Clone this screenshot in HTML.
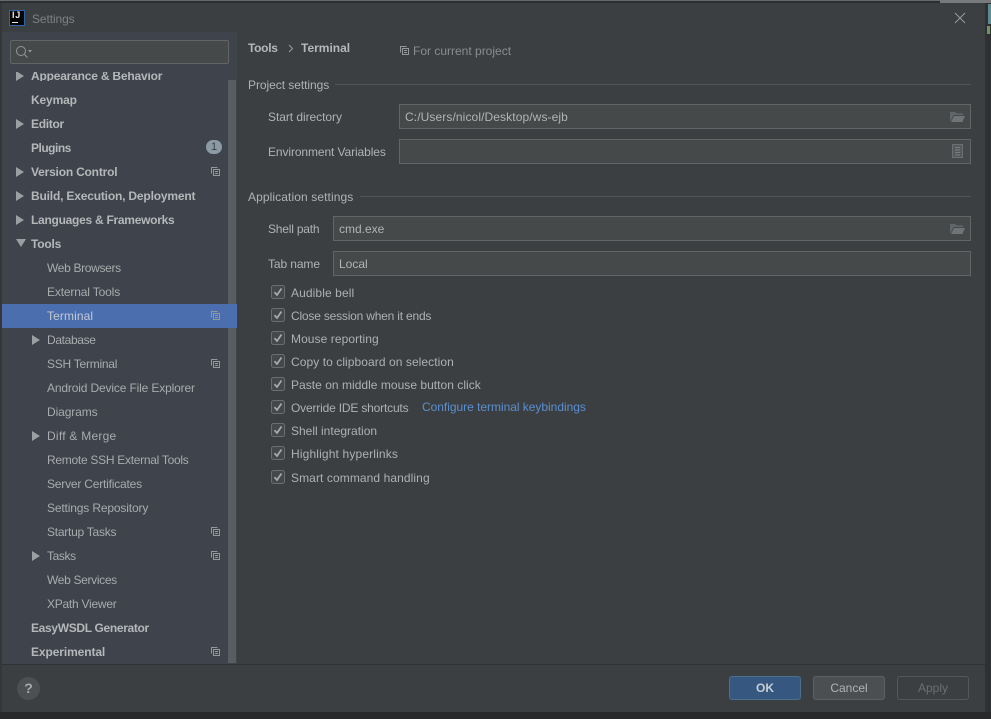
<!DOCTYPE html>
<html><head><meta charset="utf-8"><style>
html,body{margin:0;padding:0;width:991px;height:719px;overflow:hidden;background:#2b2b2b}
body{position:relative;font-family:"Liberation Sans",sans-serif;font-size:12px;color:#b0b2b3}
.a{position:absolute}
.t{position:absolute;white-space:nowrap;line-height:16px;height:16px}
.b{font-weight:bold;color:#b5b7b8}
.s{color:#a9abac}
.tri{position:absolute;width:0;height:0;border-left:8px solid #9c9fa2;border-top:5px solid transparent;border-bottom:5px solid transparent}
.cp{position:absolute;width:9px;height:9px}
.inp{position:absolute;box-sizing:border-box;background:#45494a;border:1px solid #646464;height:25px}
.cb{position:absolute;left:271px;width:14px;height:14px}
.lbl{position:absolute;left:291px;white-space:nowrap;line-height:16px;color:#aeb0b1}
.btn{position:absolute;top:676px;height:24px;box-sizing:border-box;border-radius:3px;text-align:center;line-height:23px}
</style></head><body>
<svg width="0" height="0" style="position:absolute"><defs>
<symbol id="c" viewBox="0 0 9 9"><path d="M.5 6.500V.5h6M2.500 2.500h6v6h-6zM4 4.500h3M4 6.500h3" fill="none" stroke="#95989a" stroke-width="1"/></symbol>
<symbol id="k" viewBox="0 0 14 14"><rect x=".5" y=".5" width="13" height="13" rx="2" fill="#45484a" stroke="#6b6e70"/><path d="M3.500 7.200 6 10l4.500-6.500" fill="none" stroke="#a9abad" stroke-width="1.700"/></symbol>
<symbol id="f" viewBox="0 0 15 11"><path d="M0 11V1h5l1.500 1.500H13V4H3.500L0 11z" fill="#62676a"/><path d="M1 11l3-6h11l-2.500 6z" fill="#6f7477"/></symbol>
</defs></svg>

<!-- window -->
<div class="a" style="left:0;top:0;width:991px;height:3px;background:#2d2e30"></div>
<div class="a" style="left:0;top:0;width:991px;height:1px;background:#66686a"></div>
<div class="a" style="left:940px;top:0;width:51px;height:3px;background:#77797b"></div>
<div class="a" style="left:2px;top:3px;width:983px;height:709px;background:#3c3f41"></div>
<div class="a" style="left:0;top:3px;width:2px;height:709px;background:#34373a"></div>
<div class="a" style="left:985px;top:3px;width:6px;height:716px;background:#2e3032"></div>
<div class="a" style="left:0;top:712px;width:991px;height:7px;background:#28292a"></div>
<div class="a" style="left:988px;top:4px;width:3px;height:20px;background:#5c8a90"></div>
<div class="a" style="left:987px;top:26px;width:3px;height:8px;background:#6f9460"></div>

<!-- title -->
<div class="a" style="left:9px;top:10px;width:16px;height:16px;box-sizing:border-box;background:#050505;border:1px solid #2c66a8"></div>
<div class="t" style="left:12px;top:10px;font-size:9px;font-weight:bold;color:#e8e8e8;line-height:11px;height:11px;letter-spacing:.8px">IJ</div>
<div class="a" style="left:12px;top:22px;width:6px;height:1px;background:#e8e8e8"></div>
<div class="t" style="left:32px;top:11px;color:#7e8183;letter-spacing:-.1px">Settings</div>
<svg class="a" style="left:954px;top:12px" width="12" height="12"><path d="M1 1l10 10M11 1 1 11" stroke="#999b9d" fill="none"/></svg>

<!-- sidebar -->
<div class="a" style="left:2px;top:32px;width:235px;height:632px;background:#3e434c"></div>
<div class="a" style="left:228px;top:80px;width:8px;height:583px;background:#595c61"></div>
<div class="a" style="left:2px;top:304px;width:235px;height:24px;background:#4b6eaf"></div>
<div class="a" style="left:10px;top:40px;width:219px;height:24px;box-sizing:border-box;background:#45494a;border:1px solid #646464;border-radius:2px"></div>
<svg class="a" style="left:15px;top:45px" width="18" height="14"><circle cx="6" cy="6" r="4.500" fill="none" stroke="#94979a"/><path d="M9.500 9.500l3 3" stroke="#94979a" fill="none"/><path d="M13 5h4l-2 2.500z" fill="#94979a"/></svg>

<div class="a" style="left:2px;top:72px;width:226px;height:9px;overflow:hidden">
<div class="t b" style="left:29px;top:-4px;letter-spacing:-.2px">Appearance &amp; Behavior</div>
<div class="tri" style="left:14px;top:-1px"></div>
</div>
<div class="t b" style="left:31px;top:92px;letter-spacing:-.15px">Keymap</div>
<div class="tri" style="left:16px;top:119px"></div><div class="t b" style="left:31px;top:116px;letter-spacing:-.3px">Editor</div>
<div class="t b" style="left:31px;top:140px;letter-spacing:-.5px">Plugins</div>
<div class="a" style="left:206px;top:140px;width:16px;height:14px;border-radius:7px;background:#8b9aa5;color:#3c3f41;font-size:11px;line-height:14px;text-align:center">1</div>
<div class="tri" style="left:16px;top:167px"></div><div class="t b" style="left:31px;top:164px;letter-spacing:-.2px">Version Control</div>
<svg class="cp" style="left:211px;top:167px"><use href="#c"/></svg>
<div class="tri" style="left:16px;top:191px"></div><div class="t b" style="left:31px;top:188px;letter-spacing:-.18px">Build, Execution, Deployment</div>
<div class="tri" style="left:16px;top:215px"></div><div class="t b" style="left:31px;top:212px;letter-spacing:-.27px">Languages &amp; Frameworks</div>
<div class="a" style="left:16px;top:239px;width:0;height:0;border-top:8px solid #9c9fa2;border-left:5px solid transparent;border-right:5px solid transparent"></div>
<div class="t b" style="left:31px;top:236px;letter-spacing:-.2px">Tools</div>
<div class="t s" style="left:47px;top:260px;letter-spacing:-.33px">Web Browsers</div>
<div class="t s" style="left:47px;top:284px;letter-spacing:-.15px">External Tools</div>
<div class="t" style="left:47px;top:308px;color:#c3c8d2;letter-spacing:.1px">Terminal</div>
<svg class="cp" style="left:211px;top:311px"><use href="#c"/></svg>
<div class="tri" style="left:32px;top:335px"></div><div class="t s" style="left:47px;top:332px;letter-spacing:-.35px">Database</div>
<div class="t s" style="left:47px;top:356px;letter-spacing:-.25px">SSH Terminal</div>
<svg class="cp" style="left:211px;top:359px"><use href="#c"/></svg>
<div class="t s" style="left:47px;top:380px;letter-spacing:-.15px">Android Device File Explorer</div>
<div class="t s" style="left:47px;top:404px;letter-spacing:-.1px">Diagrams</div>
<div class="tri" style="left:32px;top:431px"></div><div class="t s" style="left:47px;top:428px;letter-spacing:.25px">Diff &amp; Merge</div>
<div class="t s" style="left:47px;top:452px;letter-spacing:-.28px">Remote SSH External Tools</div>
<div class="t s" style="left:47px;top:476px;letter-spacing:-.2px">Server Certificates</div>
<div class="t s" style="left:47px;top:500px;letter-spacing:-.15px">Settings Repository</div>
<div class="t s" style="left:47px;top:524px;letter-spacing:-.25px">Startup Tasks</div>
<svg class="cp" style="left:211px;top:527px"><use href="#c"/></svg>
<div class="tri" style="left:32px;top:551px"></div><div class="t s" style="left:47px;top:548px;letter-spacing:-.4px">Tasks</div>
<svg class="cp" style="left:211px;top:551px"><use href="#c"/></svg>
<div class="t s" style="left:47px;top:572px;letter-spacing:-.33px">Web Services</div>
<div class="t s" style="left:47px;top:596px;letter-spacing:-.25px">XPath Viewer</div>
<div class="t b" style="left:31px;top:620px;letter-spacing:-.33px">EasyWSDL Generator</div>
<div class="t b" style="left:31px;top:644px;letter-spacing:-.1px">Experimental</div>
<svg class="cp" style="left:211px;top:647px"><use href="#c"/></svg>

<!-- main header -->
<div class="t b" style="left:248px;top:40px;letter-spacing:-.3px">Tools</div>
<svg class="a" style="left:288px;top:44px" width="6" height="9"><path d="M1 1l3.500 3.500L1 8" stroke="#9a9c9e" fill="none"/></svg>
<div class="t b" style="left:301px;top:40px">Terminal</div>
<svg class="cp" style="left:400px;top:46px"><use href="#c"/></svg>
<div class="t" style="left:413px;top:43px;color:#8a8d8f">For current project</div>

<!-- project settings -->
<div class="t" style="left:248px;top:77px;letter-spacing:-.05px">Project settings</div>
<div class="a" style="left:335px;top:84px;width:636px;height:1px;background:#515355"></div>
<div class="t" style="left:268px;top:109px;letter-spacing:-.05px">Start directory</div>
<div class="inp" style="left:399px;top:104px;width:572px"></div>
<div class="t" style="left:405px;top:109px;color:#b2b4b5;letter-spacing:.1px">C:/Users/nicol/Desktop/ws-ejb</div>
<svg class="a" style="left:950px;top:111px" width="15" height="11"><use href="#f"/></svg>
<div class="t" style="left:268px;top:144px;letter-spacing:-.1px">Environment Variables</div>
<div class="inp" style="left:399px;top:139px;width:572px"></div>
<svg class="a" style="left:952px;top:144px" width="11" height="14"><rect x=".5" y=".5" width="10" height="13" fill="#55595b" stroke="#6c6f71"/><path d="M3 3.500h5M3 6h5M3 8.500h5M3 11h5" stroke="#7a7d7f"/></svg>

<!-- app settings -->
<div class="t" style="left:248px;top:189px;letter-spacing:.1px">Application settings</div>
<div class="a" style="left:360px;top:196px;width:611px;height:1px;background:#515355"></div>
<div class="t" style="left:268px;top:221px;letter-spacing:-.2px">Shell path</div>
<div class="inp" style="left:333px;top:216px;width:638px"></div>
<div class="t" style="left:339px;top:221px;color:#b2b4b5">cmd.exe</div>
<svg class="a" style="left:950px;top:223px" width="15" height="11"><use href="#f"/></svg>
<div class="t" style="left:268px;top:256px;letter-spacing:-.1px">Tab name</div>
<div class="inp" style="left:333px;top:251px;width:638px"></div>
<div class="t" style="left:339px;top:256px;color:#b2b4b5">Local</div>

<!-- checkboxes -->
<svg class="cb" style="top:285px"><use href="#k"/></svg><div class="lbl" style="top:285px;letter-spacing:.1px">Audible bell</div>
<svg class="cb" style="top:308px"><use href="#k"/></svg><div class="lbl" style="top:308px;letter-spacing:-.2px">Close session when it ends</div>
<svg class="cb" style="top:331px"><use href="#k"/></svg><div class="lbl" style="top:331px;letter-spacing:.07px">Mouse reporting</div>
<svg class="cb" style="top:354px"><use href="#k"/></svg><div class="lbl" style="top:354px;letter-spacing:.07px">Copy to clipboard on selection</div>
<svg class="cb" style="top:377px"><use href="#k"/></svg><div class="lbl" style="top:377px;letter-spacing:.03px">Paste on middle mouse button click</div>
<svg class="cb" style="top:400px"><use href="#k"/></svg><div class="lbl" style="top:400px;letter-spacing:-.18px">Override IDE shortcuts</div>
<div class="t" style="left:422px;top:399px;color:#5a8fd0;letter-spacing:-.03px">Configure terminal keybindings</div>
<svg class="cb" style="top:423px"><use href="#k"/></svg><div class="lbl" style="top:423px">Shell integration</div>
<svg class="cb" style="top:446px"><use href="#k"/></svg><div class="lbl" style="top:446px;letter-spacing:.15px">Highlight hyperlinks</div>
<svg class="cb" style="top:470px"><use href="#k"/></svg><div class="lbl" style="top:470px;letter-spacing:.09px">Smart command handling</div>

<!-- footer -->
<div class="a" style="left:2px;top:664px;width:983px;height:1px;background:#323232"></div>
<div class="a" style="left:17px;top:677px;width:23px;height:23px;border-radius:50%;background:#4c5052;color:#a9abad;font-size:14px;font-weight:bold;line-height:23px;text-align:center">?</div>
<div class="btn" style="left:729px;width:72px;background:#365880;border:1px solid #4c708c;color:#c8ced4;font-weight:bold">OK</div>
<div class="btn" style="left:813px;width:72px;background:#4b4f51;border:1px solid #5e6163;color:#b0b2b3">Cancel</div>
<div class="btn" style="left:897px;width:72px;border:1px solid #55585a;color:#6c6f71">Apply</div>
</body></html>
